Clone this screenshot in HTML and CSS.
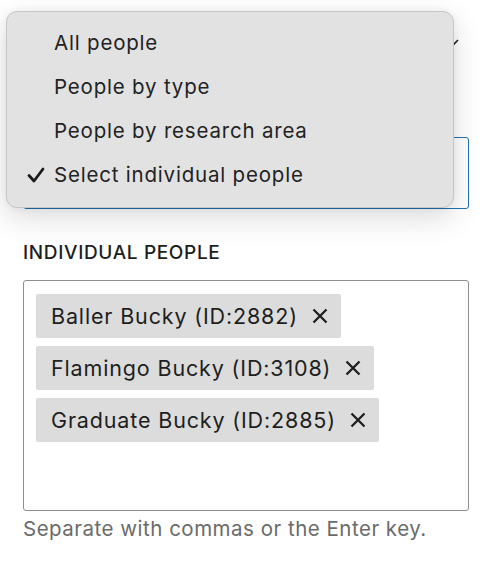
FILE: index.html
```html
<!DOCTYPE html>
<html lang="en">
<head>
<meta charset="utf-8">
<title>People selector</title>
<link rel="stylesheet" href="styles.css">
</head>
<body>
<div class="panel">
  <div class="select select-top">
    <svg class="chev" width="10" height="8" viewBox="0 0 10 8"><path d="M1 2l4 4 4-4" fill="none" stroke="#1e1e1e" stroke-width="1.6"/></svg>
  </div>
  <div class="select select-focus"></div>

  <div class="label">INDIVIDUAL PEOPLE</div>
  <div class="tokens">
    <span class="token">Baller Bucky (ID:2882)<svg class="x" width="16" height="16" viewBox="0 0 16 16"><path d="M1.5 1.5L14.5 14.5M14.5 1.5L1.5 14.5" stroke="#1e1e1e" stroke-width="2.3"/></svg></span>
    <span class="token">Flamingo Bucky (ID:3108)<svg class="x" width="16" height="16" viewBox="0 0 16 16"><path d="M1.5 1.5L14.5 14.5M14.5 1.5L1.5 14.5" stroke="#1e1e1e" stroke-width="2.3"/></svg></span>
    <span class="token">Graduate Bucky (ID:2885)<svg class="x" width="16" height="16" viewBox="0 0 16 16"><path d="M1.5 1.5L14.5 14.5M14.5 1.5L1.5 14.5" stroke="#1e1e1e" stroke-width="2.3"/></svg></span>
  </div>
  <div class="help">Separate with commas or the Enter key.</div>
</div>

<ul class="menu">
  <li class="item">All people</li>
  <li class="item">People by type</li>
  <li class="item">People by research area</li>
  <li class="item checked"><svg class="check" width="18" height="16" viewBox="0 0 18 16"><path d="M2 8.5l5 5.5L16 2" fill="none" stroke="#1a1a1a" stroke-width="2.8" stroke-linecap="round" stroke-linejoin="round"/></svg>Select individual people</li>
</ul>
</body>
</html>
```
FILE: styles.css
```css
* { box-sizing: border-box; }
html, body { margin: 0; padding: 0; background: #fff; }
body {
  font-family: Inter, "Noto Sans", sans-serif;
  color: #1e1e1e;
  width: 490px;
  height: 562px;
  overflow: hidden;
  position: relative;
}
.panel {
  padding: 20px 21px 0 23px;
  display: flex;
  flex-direction: column;
}
.select {
  border-radius: 3px;
}
.select-top {
  height: 44px;
  display: flex;
  align-items: center;
  justify-content: flex-end;
  padding: 0 10px 0 12px;
}
.select-focus {
  margin-top: 73px;
  height: 72px;
  border: 1.5px solid #2271b1;
}
.label {
  margin-top: 32px;
  font-size: 19px;
  font-weight: 500;
  line-height: 24px;
  letter-spacing: 0.65px;
}
.tokens {
  margin-top: 15px;
  height: 231px;
  border: 1px solid #8f8f8f;
  border-radius: 3px;
  padding: 13px 12px;
  display: flex;
  flex-direction: column;
  align-items: flex-start;
  gap: 8px;
}
.token {
  height: 44px;
  background: #dcdcdc;
  border-radius: 2px;
  display: flex;
  align-items: center;
  padding: 0 13px 0 15px;
  font-size: 21.5px;
  letter-spacing: 0.85px;
  gap: 14px;
}
.x { flex: none; }
.help {
  margin-top: 5px;
  font-size: 20.5px;
  line-height: 26px;
  letter-spacing: 0.5px;
  color: #6b6b6b;
}
.menu {
  position: absolute;
  left: 6px;
  top: 11px;
  width: 448px;
  height: 197px;
  margin: 0;
  padding: 8px 0 0;
  list-style: none;
  background: #e2e2e2;
  border: 1px solid #c6c6c6;
  border-radius: 11px;
  box-shadow: 0 10px 30px rgba(0,0,0,0.14), 0 0 8px rgba(0,0,0,0.06);
}
.item {
  height: 44px;
  display: flex;
  align-items: center;
  padding-left: 47px;
  font-size: 20.5px;
  letter-spacing: 0.8px;
  color: #222;
  position: relative;
}
.check {
  position: absolute;
  left: 20px;
  top: 15px;
}
```
